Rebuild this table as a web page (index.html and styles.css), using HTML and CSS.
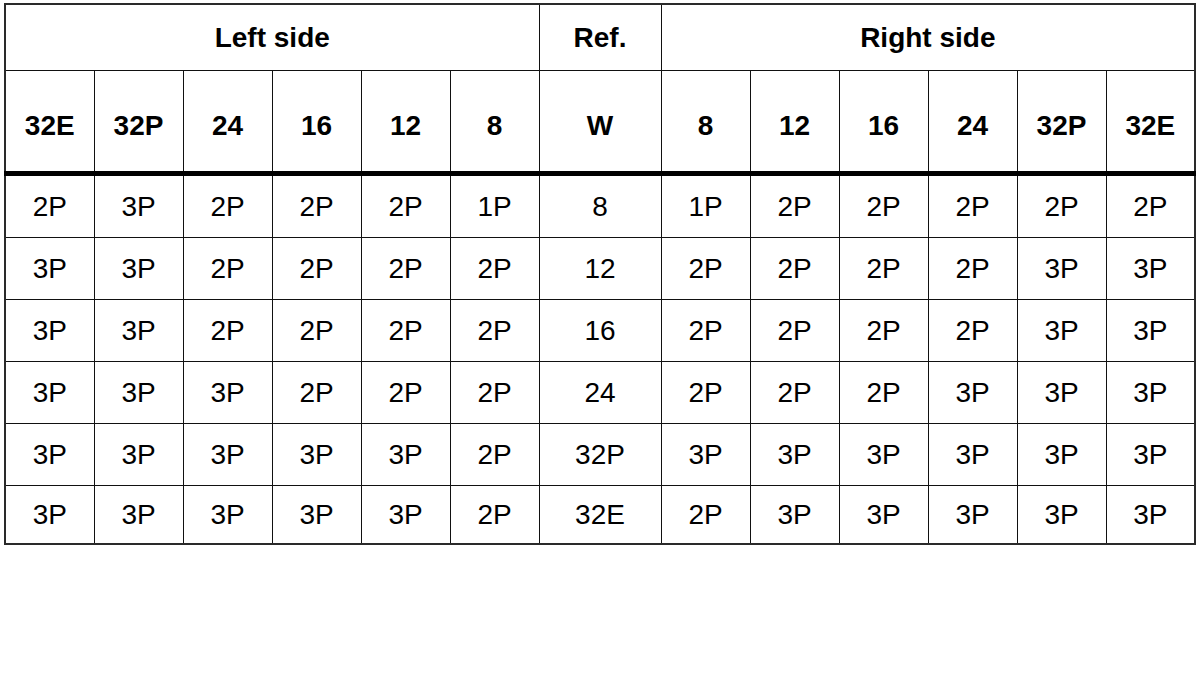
FILE: index.html
```html
<!DOCTYPE html>
<html>
<head>
<meta charset="utf-8">
<link rel="stylesheet" href="styles.css">
</head>
<body>
<table class="grid">
  <colgroup>
    <col class="c"><col class="c"><col class="c"><col class="c"><col class="c"><col class="c">
    <col class="ref">
    <col class="c"><col class="c"><col class="c"><col class="c"><col class="c"><col class="c">
  </colgroup>
  <thead>
    <tr class="h1">
      <th colspan="6">Left side</th>
      <th>Ref.</th>
      <th colspan="6">Right side</th>
    </tr>
    <tr class="h2">
      <th>32E</th><th>32P</th><th>24</th><th>16</th><th>12</th><th>8</th>
      <th>W</th>
      <th>8</th><th>12</th><th>16</th><th>24</th><th>32P</th><th>32E</th>
    </tr>
  </thead>
  <tbody>
    <tr><td>2P</td><td>3P</td><td>2P</td><td>2P</td><td>2P</td><td>1P</td><td>8</td><td>1P</td><td>2P</td><td>2P</td><td>2P</td><td>2P</td><td>2P</td></tr>
    <tr><td>3P</td><td>3P</td><td>2P</td><td>2P</td><td>2P</td><td>2P</td><td>12</td><td>2P</td><td>2P</td><td>2P</td><td>2P</td><td>3P</td><td>3P</td></tr>
    <tr><td>3P</td><td>3P</td><td>2P</td><td>2P</td><td>2P</td><td>2P</td><td>16</td><td>2P</td><td>2P</td><td>2P</td><td>2P</td><td>3P</td><td>3P</td></tr>
    <tr><td>3P</td><td>3P</td><td>3P</td><td>2P</td><td>2P</td><td>2P</td><td>24</td><td>2P</td><td>2P</td><td>2P</td><td>3P</td><td>3P</td><td>3P</td></tr>
    <tr><td>3P</td><td>3P</td><td>3P</td><td>3P</td><td>3P</td><td>2P</td><td>32P</td><td>3P</td><td>3P</td><td>3P</td><td>3P</td><td>3P</td><td>3P</td></tr>
    <tr class="last"><td>3P</td><td>3P</td><td>3P</td><td>3P</td><td>3P</td><td>2P</td><td>32E</td><td>2P</td><td>3P</td><td>3P</td><td>3P</td><td>3P</td><td>3P</td></tr>
  </tbody>
</table>
</body>
</html>
```
FILE: styles.css
```css
html, body {
  margin: 0;
  padding: 0;
  background: #fff;
}
body {
  padding: 3px 4px;
  font-family: "Liberation Sans", Arial, sans-serif;
  color: #000;
}
.grid {
  border-collapse: collapse;
  table-layout: fixed;
  width: 1191px;
  border: 2px solid #2a2a2a;
}
.grid col.c { width: 89px; }
.grid col.ref { width: 122px; }
.grid th, .grid td {
  border: 1px solid #111;
  text-align: center;
  vertical-align: middle;
  padding: 0;
  font-size: 28px;
}
.grid th {
  font-weight: bold;
}
.grid td {
  font-weight: normal;
}
.grid .h1 th { height: 65px; }
.grid .h2 th {
  height: 90px;
  padding-top: 10px;
  border-bottom: 5px solid #000;
}
.grid tbody td { height: 61px; }
.grid tbody tr.last td { height: 57px; }
```
